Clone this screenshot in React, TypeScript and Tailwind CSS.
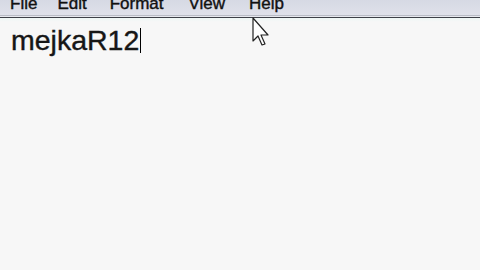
import React from "react";

export default function App() {
  return (
    <div className="w-[480px] h-[270px] overflow-hidden bg-[#f7f7f7] relative" style={{ fontFamily: '"Liberation Sans", Arial, sans-serif' }}>
      <div className="h-[15px] bg-gradient-to-b from-[#d6d9e4] to-[#dfe1ea] relative overflow-hidden">
        <div className="flex text-[17px] leading-none text-[#111] -mt-[5px] [-webkit-text-stroke:0.4px_#111]">
          <span className="ml-[10px]">File</span>
          <span className="ml-[20px]">Edit</span>
          <span className="ml-[23px]">Format</span>
          <span className="ml-[25px]">View</span>
          <span className="ml-[24px]">Help</span>
        </div>
      </div>
      <div className="h-[1px] bg-[#b9bcc6]" />
      <div className="h-[1px] bg-[#e6e8ee]" />
      <div className="h-[1px] bg-[#3d4048]" />
      <div className="h-[4px] bg-gradient-to-b from-[#eef7f6] to-[#f7f7f7]" />
      <div className="pl-[11px] pt-[3px] flex items-center">
        <span className="text-[28.5px] leading-[30px] text-[#161616] [-webkit-text-stroke:0.4px_#161616]">mejkaR12</span>
        <span className="w-[1px] h-[25px] bg-black ml-[1px]" />
      </div>
      <svg className="absolute left-[252px] top-[17px]" width="20" height="30" viewBox="0 0 20 30">
        <path d="M1 1 L1 24 L6 19 L10 28 L13 27 L9 18 L16 18 Z" fill="#fff" stroke="#222" strokeWidth="1.2" strokeLinejoin="round" />
      </svg>
    </div>
  );
}
